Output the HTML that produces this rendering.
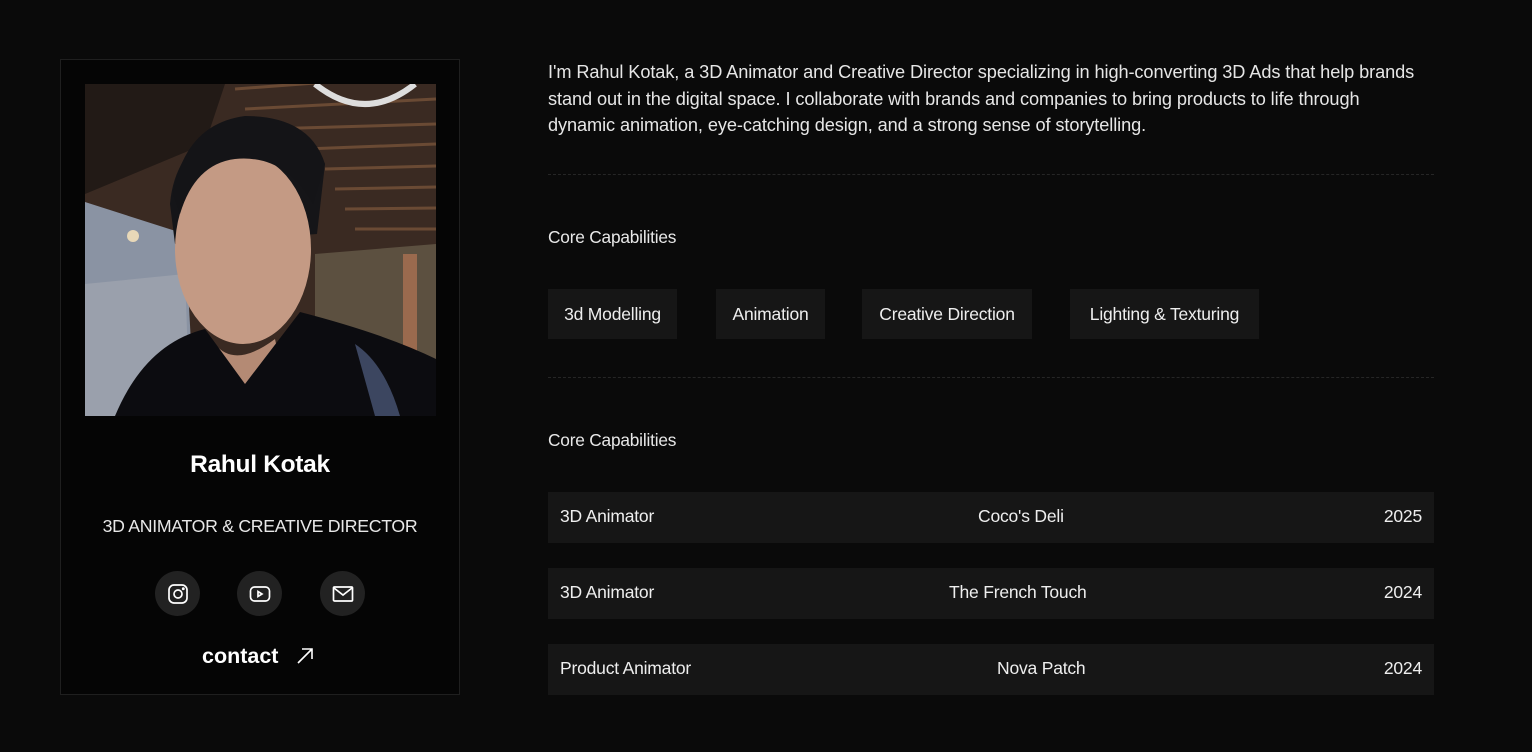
<!DOCTYPE html>
<html><head><meta charset="utf-8"><style>
*{margin:0;padding:0;box-sizing:border-box}
body{width:1532px;height:752px;background:#0a0a0a;font-family:"Liberation Sans",sans-serif;color:#eee;position:relative;overflow:hidden}
.card{position:absolute;left:60px;top:59px;width:400px;height:636px;border:1px solid #1f1f1f;background:#050505}
.photo{position:absolute;left:24px;top:24px;width:351px;height:332px;overflow:hidden}
.name{position:absolute;left:0;width:100%;top:391px;text-align:center;font-size:24.5px;font-weight:bold;color:#fff;letter-spacing:-0.3px}
.role{position:absolute;left:0;width:100%;top:456px;text-align:center;font-size:17.7px;color:#e8e8e8;letter-spacing:-0.3px}
.ic{position:absolute;top:511px;width:45px;height:45px;border-radius:50%;background:#222;display:flex;align-items:center;justify-content:center}
.contact{position:absolute;left:141px;top:584px;font-size:21.5px;font-weight:bold;color:#fff}
.bio{position:absolute;left:548px;top:59px;white-space:nowrap;font-size:18.2px;line-height:26.5px;color:#e6e6e6;letter-spacing:-0.1px}
.hr{position:absolute;left:548px;width:886px;border-top:1px dashed #262626}
.h{position:absolute;left:548px;font-size:17.3px;color:#e8e8e8;letter-spacing:-0.2px}
.chip{position:absolute;top:289px;height:50px;background:#161616;font-size:17.5px;color:#eee;display:flex;align-items:center;justify-content:center;letter-spacing:-0.2px}
.row{position:absolute;left:548px;width:886px;height:51px;background:#161616;font-size:17.5px;color:#eee;letter-spacing:-0.2px}
.row span{position:absolute;top:14px}
</style></head><body>
<div class="card">
<div class="photo">
<svg width="351" height="332" viewBox="0 0 351 332">
<rect width="351" height="332" fill="#3a2a22"/>
<g stroke="#6a4a34" stroke-width="3">
<line x1="150" y1="5" x2="351" y2="-10"/><line x1="160" y1="25" x2="351" y2="15"/><line x1="180" y1="45" x2="351" y2="40"/><line x1="220" y1="65" x2="351" y2="60"/><line x1="240" y1="85" x2="351" y2="82"/><line x1="250" y1="105" x2="351" y2="103"/><line x1="260" y1="125" x2="351" y2="124"/><line x1="270" y1="145" x2="351" y2="145"/></g>
<path d="M0 0H140L120 60 0 110Z" fill="#221a16"/>
<path d="M0 118L100 150 110 332H0Z" fill="#8a93a3"/>
<path d="M0 200L100 190 105 332H0Z" fill="#9aa0ac"/>
<circle cx="48" cy="152" r="6" fill="#e8d8b8"/>
<path d="M230 170L351 160V290H230Z" fill="#5c5040"/>
<rect x="318" y="170" width="14" height="140" fill="#9a6a4e"/>
<path d="M230 0Q280 40 330 0" stroke="#ddd" stroke-width="6" fill="none"/>
<path d="M85 120Q90 60 150 35Q215 25 240 80L232 150 90 160Z" fill="#151518"/>
<ellipse cx="158" cy="165" rx="68" ry="95" fill="#c49a84"/>
<path d="M88 110Q100 40 160 32Q225 32 240 80L228 120Q200 70 150 75Q110 80 95 130Z" fill="#141417"/>
<path d="M130 260Q150 285 190 255L200 300H120Z" fill="#b48a74"/>
<path d="M30 332Q60 260 120 245L160 300 215 228Q300 250 351 275V332Z" fill="#0c0c10"/>
<path d="M270 260Q300 280 315 332H290Z" fill="#3c4660"/>
</svg>
</div>
<div class="name">Rahul Kotak</div>
<div class="role">3D ANIMATOR &amp; CREATIVE DIRECTOR</div>
<div class="ic" style="left:94px"><svg width="24" height="24" viewBox="0 0 24 24" fill="none" stroke="#fff" stroke-width="1.7"><rect x="3" y="3" width="18" height="18" rx="5"/><circle cx="12" cy="12" r="4"/><circle cx="17.3" cy="6.7" r=".6" fill="#fff"/></svg></div>
<div class="ic" style="left:176px"><svg width="24" height="24" viewBox="0 0 24 24" fill="none" stroke="#fff" stroke-width="1.7"><rect x="2.5" y="5" width="19" height="14" rx="4"/><path d="M10 9.5v5l4-2.5z"/></svg></div>
<div class="ic" style="left:259px"><svg width="24" height="24" viewBox="0 0 24 24" fill="none" stroke="#fff" stroke-width="1.7"><rect x="2.5" y="5" width="19" height="14" rx="1"/><path d="M3 6l9 7 9-7"/></svg></div>
<div class="contact">contact <svg style="margin-left:12px;vertical-align:-2px" width="18" height="18" viewBox="0 0 18 18" fill="none" stroke="#fff" stroke-width="1.6"><path d="M2 16L16 2M6 2h10v10"/></svg></div>
</div>

<div class="bio">I'm Rahul Kotak, a 3D Animator and Creative Director specializing in high-converting 3D Ads that help brands<br>stand out in the digital space. I collaborate with brands and companies to bring products to life through<br>dynamic animation, eye-catching design, and a strong sense of storytelling.</div>
<div class="hr" style="top:174px"></div>
<div class="h" style="top:227px">Core Capabilities</div>
<div class="chip" style="left:548px;width:129px">3d Modelling</div>
<div class="chip" style="left:716px;width:109px">Animation</div>
<div class="chip" style="left:862px;width:170px">Creative Direction</div>
<div class="chip" style="left:1070px;width:189px">Lighting &amp; Texturing</div>
<div class="hr" style="top:377px"></div>
<div class="h" style="top:430px">Core Capabilities</div>
<div class="row" style="top:492px"><span style="left:12px">3D Animator</span><span style="left:430px">Coco's Deli</span><span style="right:12px">2025</span></div>
<div class="row" style="top:568px"><span style="left:12px">3D Animator</span><span style="left:401px">The French Touch</span><span style="right:12px">2024</span></div>
<div class="row" style="top:644px"><span style="left:12px">Product Animator</span><span style="left:449px">Nova Patch</span><span style="right:12px">2024</span></div>
</body></html>
